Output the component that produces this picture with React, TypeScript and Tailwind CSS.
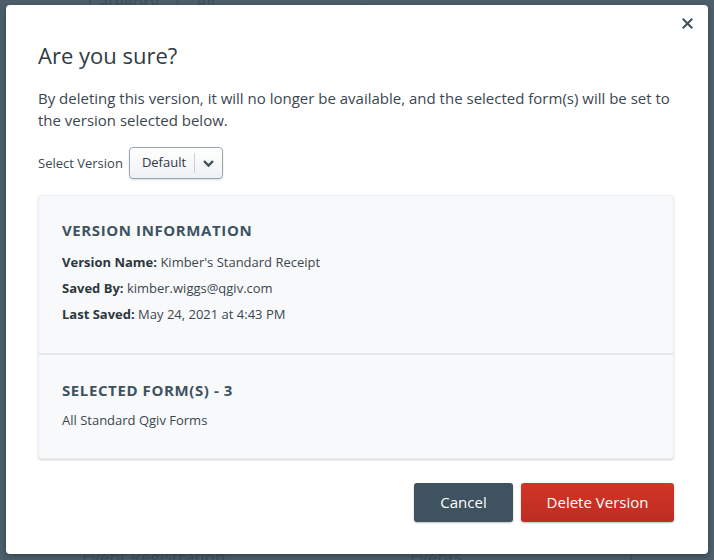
import React from "react";

export default function App() {
  const font = { fontFamily: "'Open Sans', Lato, 'Liberation Sans', sans-serif" };
  return (
    <div className="relative w-[714px] h-[560px] overflow-hidden bg-[#4c5f6b]" style={font}>
      {/* faint background page */}
      <div className="absolute inset-0 flex flex-col text-[#3e505b] text-[17px]">
        <div className="flex items-center h-[12px] pl-[88px] gap-[14px] -mt-[4px]">
          <span>Category</span><span>|</span><span>All</span>
          <span className="ml-[128px]">⌄</span>
        </div>
        <div className="mt-auto flex items-center h-[14px] pl-[80px] mb-[-4px]">
          <span className="w-[330px] pl-[2px]">Event Registration</span>
          <span className="w-[150px]">Events</span>
          <span className="ml-[66px]">1</span>
        </div>
      </div>
      <div className="absolute inset-0 pl-[6px] pr-[6px] pt-[5px] pb-[6px]">
        <div className="relative h-full bg-white rounded-[4px] shadow-[0_2px_6px_rgba(0,0,0,0.3)] pl-[32px] pr-[34px] pt-[36px] flex flex-col">
          <button className="absolute right-[15px] top-[13px] text-[#3d4f5b]">
            <svg width="11" height="11" viewBox="0 0 11 11"><path d="M1.5 1.5l8 8M9.5 1.5l-8 8" stroke="currentColor" strokeWidth="2" strokeLinecap="square" /></svg>
          </button>
          <h2 className="text-[22px] leading-[28px] text-[#2f3b44]">Are you sure?</h2>
          <p className="mt-[18px] text-[15px] leading-[22px] text-[#3b4750]">
            By deleting this version, it will no longer be available, and the selected form(s) will be set to the version selected below.
          </p>
          <div className="mt-[16px] flex items-center gap-[6px]">
            <span className="text-[13px] text-[#3b4750] pt-[2px]">Select Version</span>
            <div className="flex items-center h-[32px] border border-[#9aa5ad] rounded-[4px] bg-gradient-to-b from-white to-[#eef1f3] shadow-[0_1px_2px_rgba(0,0,0,0.15)]">
              <span className="pl-[12px] pr-[8px] text-[13px] text-[#2f3b44]">Default</span>
              <span className="w-px h-[20px] bg-[#c9d0d5]" />
              <span className="px-[7px] text-[#3d4f5b]">
                <svg width="13" height="9" viewBox="0 0 13 9"><path d="M2 2l4.5 4.5L11 2" fill="none" stroke="currentColor" strokeWidth="2.4" /></svg>
              </span>
            </div>
          </div>
          <div className="mt-[16px] bg-[#f7f9fa] border border-[#eceff1] rounded-[4px] shadow-[0_1px_2px_rgba(0,0,0,0.18)]">
            <div className="px-[23px] pt-[23px] pb-[28px] border-b-2 border-[#e5e9ec]">
              <h3 className="text-[15px] font-bold tracking-[0.6px] text-[#3d5361] leading-[22px]">VERSION INFORMATION</h3>
              <div className="mt-[10px] flex flex-col gap-[4px] text-[13px] leading-[22px] text-[#3b4750]">
                <div><b className="text-[#2c3840]">Version Name:</b> Kimber's Standard Receipt</div>
                <div><b className="text-[#2c3840]">Saved By:</b> kimber.wiggs@qgiv.com</div>
                <div><b className="text-[#2c3840]">Last Saved:</b> May 24, 2021 at 4:43 PM</div>
              </div>
            </div>
            <div className="px-[23px] pt-[24px] pb-[27px]">
              <h3 className="text-[15px] font-bold tracking-[0.6px] text-[#3d5361] leading-[22px]">SELECTED FORM(S) - 3</h3>
              <div className="mt-[8px] text-[13px] leading-[22px] text-[#3b4750]">All Standard Qgiv Forms</div>
            </div>
          </div>
          <div className="mt-[24px] flex justify-end gap-[8px]">
            <button className="h-[39px] w-[99px] rounded-[3px] bg-[#3e5260] text-white text-[15px] shadow-[0_1px_2px_rgba(0,0,0,0.25)]">Cancel</button>
            <button className="h-[39px] w-[153px] rounded-[3px] bg-gradient-to-b from-[#d23526] to-[#bd2d22] text-white text-[15px] shadow-[0_1px_2px_rgba(0,0,0,0.25)]">Delete Version</button>
          </div>
        </div>
      </div>
    </div>
  );
}
